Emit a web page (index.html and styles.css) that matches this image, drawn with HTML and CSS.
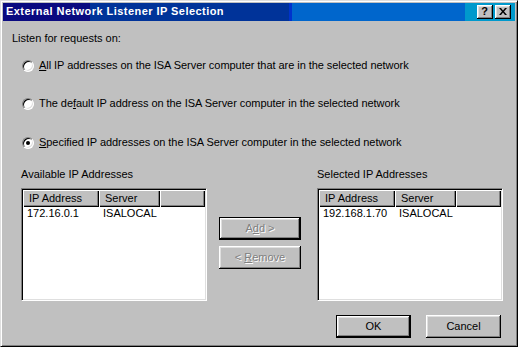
FILE: index.html
```html
<!DOCTYPE html>
<html>
<head>
<meta charset="utf-8">
<link rel="stylesheet" href="styles.css">
</head>
<body>
<div class="window">
  <div class="titlebar">
    <span class="title">External Network Listener IP Selection</span>
    <div class="tbtns">
      <span class="tbtn help">?</span>
      <span class="tbtn">
        <svg width="8" height="7" viewBox="0 0 8 7"><path d="M0 0h2l2 2.5L6 0h2L5 3.5 8 7H6L4 4.5 2 7H0l3-3.5z" fill="#000"/></svg>
      </span>
    </div>
  </div>
  <div class="client">
    <div class="prompt">Listen for requests on:</div>
    <div class="options">
      <div class="opt"><span class="radio"></span><span><u>A</u>ll IP addresses on the ISA Server computer that are in the selected network</span></div>
      <div class="opt"><span class="radio"></span><span>The de<u>f</u>ault IP address on the ISA Server computer in the selected network</span></div>
      <div class="opt third"><span class="radio checked"></span><span><u>S</u>pecified IP addresses on the ISA Server computer in the selected network</span></div>
    </div>
    <div class="lists">
      <div class="group">
        <div class="glabel">Available IP Addresses</div>
        <div class="listview">
          <div class="lvhead"><span>IP Address</span><span>Server</span><span></span></div>
          <div class="lvrow"><span>172.16.0.1</span><span>ISALOCAL</span><span></span></div>
        </div>
      </div>
      <div class="mid">
        <div class="btn default disabled"><span>A<u>d</u>d &gt;</span></div>
        <div class="btn disabled"><span>&lt; <u>R</u>emove</span></div>
      </div>
      <div class="group">
        <div class="glabel">Selected IP Addresses</div>
        <div class="listview">
          <div class="lvhead"><span>IP Address</span><span>Server</span><span></span></div>
          <div class="lvrow"><span>192.168.1.70</span><span>ISALOCAL</span><span></span></div>
        </div>
      </div>
    </div>
    <div class="footer">
      <div class="btn default wide"><span>OK</span></div>
      <div class="btn wide"><span>Cancel</span></div>
    </div>
  </div>
</div>
</body>
</html>
```
FILE: styles.css
```css
* { box-sizing: border-box; }
html, body { margin: 0; padding: 0; background: #c0c0c0; }
body {
  font-family: Tahoma, "Liberation Sans", Arial, sans-serif;
  font-size: 11px;
  line-height: 13px;
  color: #000;
}
.window {
  width: 518px;
  height: 347px;
  background: #c0c0c0;
  border: 1px solid;
  border-color: #dfdfdf #000 #000 #dfdfdf;
  box-shadow: inset 1px 1px #fff, inset -1px -1px #808080;
  padding: 2px;
  display: flex;
  flex-direction: column;
}
.titlebar {
  height: 18px;
  flex: none;
  display: flex;
  justify-content: space-between;
  align-items: flex-start;
  padding: 2px 4px 0 3px;
  color: #fff;
  font-weight: bold;
  background: linear-gradient(to right,
    #0a0a80 0, #0a0a80 17%,
    #003399 17%, #003399 55.9%,
    #0033cc 55.9%, #0033cc 56.5%,
    #0066cc 56.5%, #0066cc 90.2%,
    #0099cc 90.2%, #0099cc 100%);
}
.title { height: 13px; white-space: nowrap; letter-spacing: 0.45px; }
.tbtns { display: flex; gap: 2px; }
.tbtn {
  width: 16px;
  height: 14px;
  background: #c0c0c0;
  color: #000;
  box-shadow: inset -1px -1px #000, inset 1px 1px #fff, inset -2px -2px #808080, inset 2px 2px #dfdfdf;
  display: flex;
  align-items: center;
  justify-content: center;
  font-weight: bold;
  font-size: 11px;
  line-height: 11px;
  padding: 0 1px 1px 0;
}
.tbtn svg { display: block; }
.client {
  flex: 1;
  display: flex;
  flex-direction: column;
  padding: 11px 12px 0 9px;
}
.prompt { height: 13px; }
.options {
  margin: 14px 0 0 10px;
  display: flex;
  flex-direction: column;
  gap: 25px;
}
.opt {
  height: 13px;
  display: flex;
  align-items: center;
  gap: 5px;
  white-space: nowrap;
  letter-spacing: -0.05px;
}
.opt.third { margin-top: 1px; }
.radio {
  width: 12px;
  height: 12px;
  flex: none;
  border-radius: 50%;
  background: #fff;
  border: 1px solid;
  border-color: #808080 #fff #fff #808080;
  box-shadow: inset 1px 1px #000, inset -1px -1px #dfdfdf;
  display: flex;
  align-items: center;
  justify-content: center;
}
.radio.checked::after {
  content: "";
  width: 4px;
  height: 4px;
  border-radius: 50%;
  background: #000;
}
.lists {
  margin: 19px 0 0 9px;
  display: flex;
}
.group {
  width: 186px;
  display: flex;
  flex-direction: column;
}
.glabel { height: 13px; white-space: nowrap; }
.listview {
  margin-top: 7px;
  height: 113px;
  background: #fff;
  border: 1px solid;
  border-color: #808080 #fff #fff #808080;
  box-shadow: inset 1px 1px #000, inset -1px -1px #dfdfdf;
  padding: 1px;
}
.lvhead, .lvrow {
  display: grid;
  grid-template-columns: 76px 61px 1fr;
}
.lvhead { height: 17px; }
.lvhead span {
  background: #c0c0c0;
  box-shadow: inset 1px 1px #fff, inset -1px -1px #000, inset -2px -2px #808080;
  padding: 2px 0 0 6px;
  white-space: nowrap;
  overflow: hidden;
}
.lvrow { height: 13px; }
.lvrow span { padding-left: 4px; white-space: nowrap; }
.mid {
  width: 82px;
  margin: 0 16px 0 12px;
  padding-top: 49px;
  display: flex;
  flex-direction: column;
  gap: 6px;
}
.btn {
  height: 23px;
  width: 82px;
  background: #c0c0c0;
  box-shadow: inset -1px -1px #000, inset 1px 1px #fff, inset -2px -2px #808080, inset 2px 2px #dfdfdf;
  display: flex;
  align-items: center;
  justify-content: center;
  white-space: nowrap;
}
.btn.default { border: 1px solid #000; }
.btn.disabled { color: #808080; text-shadow: 1px 1px #fff; }
.btn.wide { width: 75px; }
.footer {
  margin-top: 14px;
  display: flex;
  justify-content: flex-end;
  gap: 15px;
  padding-right: 2px;
}
```
